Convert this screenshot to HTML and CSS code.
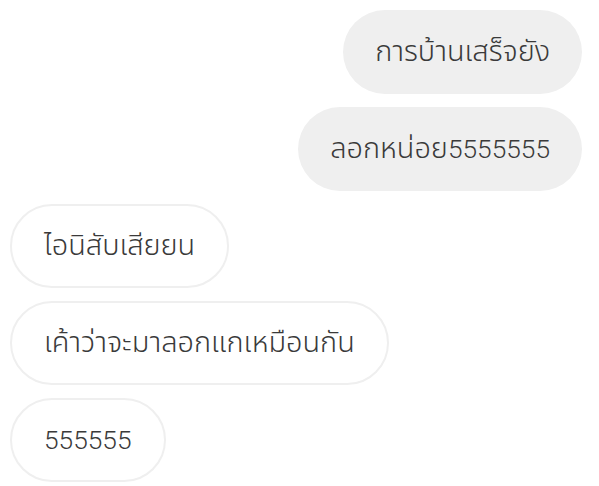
FILE: index.html
```html
<!DOCTYPE html>
<html lang="th">
<head>
<meta charset="utf-8">
<link rel="stylesheet" href="styles.css">
</head>
<body>
<div class="chat">
  <div class="msg out">การบ้านเสร็จยัง</div>
  <div class="msg out">ลอกหน่อย<span class="num">5555555</span></div>
  <div class="msg in">ไอนิสับเสียยน</div>
  <div class="msg in">เค้าว่าจะมาลอกแกเหมือนกัน</div>
  <div class="msg in"><span class="num">555555</span></div>
</div>
</body>
</html>
```
FILE: styles.css
```css
html, body {
  margin: 0;
  padding: 0;
  background: #ffffff;
}
body {
  font-family: Roboto, "Noto Sans", "Noto Sans Thai", sans-serif;
}
.chat {
  display: flex;
  flex-direction: column;
  gap: 13px;
  padding: 10px 17px 0 10px;
}
.msg {
  box-sizing: border-box;
  height: 84px;
  display: flex;
  align-items: center;
  padding: 0 32px;
  border-radius: 42px;
  font-size: 28.9px;
  font-weight: 350;
  color: #3a3a3a;
  white-space: nowrap;
}
.num {
  font-size: 26.3px;
  font-weight: 300;
}
.out {
  align-self: flex-end;
  background: #efefef;
}
.in {
  align-self: flex-start;
  background: #ffffff;
  border: 2px solid #efefef;
}
```
